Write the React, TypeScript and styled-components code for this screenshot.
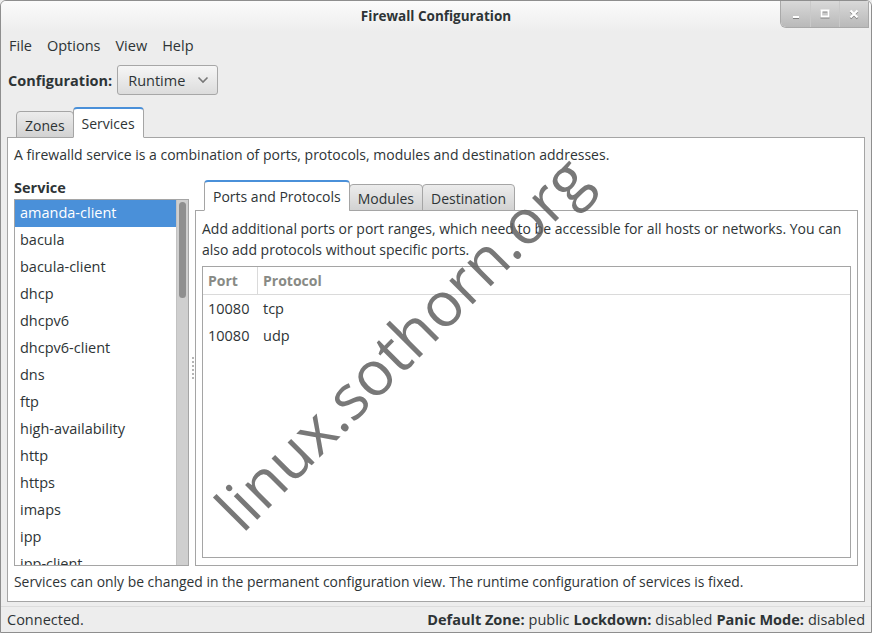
import React from "react";
import styled, { createGlobalStyle } from "styled-components";

const FONT = `"Open Sans", "DejaVu Sans", sans-serif`;

const GlobalStyle = createGlobalStyle`
  html, body {
    margin: 0;
    padding: 0;
    background: #ededed;
  }
  body {
    font-family: ${FONT};
    font-size: 14px;
    color: #2e3436;
  }
  * {
    box-sizing: border-box;
  }
`;

const Window = styled.div`
  position: relative;
  width: 872px;
  height: 633px;
  display: flex;
  flex-direction: column;
  background: #ededed;
  border: 1px solid #8e8e8e;
  border-radius: 6px 6px 0 0;
  overflow: hidden;
`;

const TitleBar = styled.div`
  height: 31px;
  display: grid;
  grid-template-columns: 1fr auto 1fr;
  background: linear-gradient(#fbfbfb, #ededed);
`;

const Title = styled.div`
  grid-column: 2;
  font-weight: bold;
  font-size: 13.5px;
  line-height: 31px;
`;

const WinButtons = styled.div`
  justify-self: end;
  align-self: start;
  display: flex;
  height: 28px;
  margin-top: -1px;
  margin-right: 2px;
  border: 1px solid #a9a9a9;
  border-top: none;
  border-radius: 0 0 0 6px;
  overflow: hidden;
`;

const WinButton = styled.div<{ $first?: boolean }>`
  width: 29px;
  height: 100%;
  display: flex;
  align-items: center;
  justify-content: center;
  background: linear-gradient(#dadada, #b9b9b9);
  border-left: ${(p) => (p.$first ? "none" : "1px solid #c9c9c9")};
  svg {
    filter: drop-shadow(0 1px 0 rgba(0, 0, 0, 0.35));
  }
`;

const MenuBar = styled.div`
  display: flex;
  height: 28px;
  align-items: center;
  margin-top: -1px;
`;

const MenuItem = styled.div`
  padding: 0 7px 0 8px;
  font-size: 14.5px;
  &:first-child {
    padding-left: 8px;
  }
`;

const ConfigRow = styled.div`
  display: flex;
  align-items: center;
  gap: 5px;
  height: 30px;
  margin-top: 6px;
  padding-left: 7px;
`;

const ConfigLabel = styled.div`
  font-weight: bold;
  font-size: 14.5px;
`;

const Combo = styled.div`
  width: 101px;
  height: 30px;
  display: flex;
  align-items: center;
  justify-content: space-between;
  padding: 0 8px 0 10px;
  font-size: 14.5px;
  border: 1px solid #a7a7a7;
  border-radius: 3px;
  background: linear-gradient(#f6f6f6, #dcdcdc);
`;

const Notebook = styled.div`
  flex: 1;
  display: flex;
  flex-direction: column;
  min-height: 0;
  padding: 0 6px 0 6px;
`;

const TabStrip = styled.div<{ $indent: number; $height: number }>`
  display: flex;
  align-items: flex-end;
  height: ${(p) => p.$height}px;
  padding-left: ${(p) => p.$indent}px;
  margin-bottom: -1px;
  position: relative;
  z-index: 1;
`;

const Tab = styled.div<{ $active?: boolean }>`
  display: flex;
  align-items: center;
  padding: 0 8px;
  font-size: 14px;
  height: ${(p) => (p.$active ? "31px" : "27px")};
  border: 1px solid #a5a5a5;
  border-bottom: ${(p) => (p.$active ? "1px solid #ffffff" : "1px solid #a5a5a5")};
  border-top: ${(p) => (p.$active ? "2px solid #4a90d9" : "1px solid #a5a5a5")};
  border-radius: 4px 4px 0 0;
  background: ${(p) =>
    p.$active ? "#ffffff" : "linear-gradient(#ececec, #d2d2d2)"};
  margin-right: -1px;
  padding-top: ${(p) => (p.$active ? "0" : "1px")};
`;

const Panel = styled.div`
  flex: 1;
  min-height: 0;
  display: flex;
  flex-direction: column;
  background: #ffffff;
  border: 1px solid #a5a5a5;
  padding: 8px 6px 10px 6px;
`;

const Text = styled.div<{ $lh?: number }>`
  font-size: 14px;
  line-height: ${(p) => p.$lh ?? 18}px;
  white-space: nowrap;
`;

const Split = styled.div`
  flex: 1;
  min-height: 0;
  display: grid;
  grid-template-columns: 175px 6px 1fr;
  margin-top: 15px;
`;

const ServiceColumn = styled.div`
  display: flex;
  flex-direction: column;
  min-height: 0;
`;

const ColumnLabel = styled.div`
  font-weight: bold;
  font-size: 14.5px;
  line-height: 18px;
  margin-bottom: 2px;
`;

const ListBox = styled.div`
  flex: 1;
  min-height: 0;
  display: flex;
  border: 1px solid #a5a5a5;
  overflow: hidden;
`;

const Rows = styled.div`
  flex: 1;
  overflow: hidden;
`;

const ServiceRow = styled.div<{ $selected?: boolean }>`
  height: 27px;
  line-height: 26px;
  padding-left: 5px;
  font-size: 14.5px;
  color: ${(p) => (p.$selected ? "#ffffff" : "#2e3436")};
  background: ${(p) => (p.$selected ? "#4a90d9" : "transparent")};
`;

const ScrollTrack = styled.div`
  width: 12px;
  background: #cfcfcf;
  border-left: 1px solid #c2c2c2;
  padding: 2px 2px 0 2px;
`;

const ScrollThumb = styled.div`
  height: 96px;
  border-radius: 4px;
  background: #8f8f8f;
`;

const Handle = styled.div`
  display: flex;
  align-items: center;
  justify-content: center;
`;

const Dots = styled.div`
  width: 2px;
  height: 22px;
  margin-left: 1px;
  margin-top: -10px;
  background: repeating-linear-gradient(#b5b5b5 0 2px, transparent 2px 4px);
`;

const InnerNotebook = styled.div`
  display: flex;
  flex-direction: column;
  min-height: 0;
`;

const InnerPanel = styled.div`
  flex: 1;
  min-height: 0;
  display: flex;
  flex-direction: column;
  border: 1px solid #a5a5a5;
  padding: 7px 6px 7px 6px;
`;

const Table = styled.div`
  flex: 1;
  margin-top: 6px;
  border: 1px solid #a5a5a5;
`;

const HeaderRow = styled.div`
  display: grid;
  grid-template-columns: 55px 1fr;
  height: 28px;
  border-bottom: 1px solid #dadada;
`;

const HeaderCell = styled.div<{ $divider?: boolean }>`
  display: flex;
  align-items: center;
  padding-left: 5px;
  font-weight: bold;
  font-size: 14px;
  color: #888a85;
  border-right: ${(p) => (p.$divider ? "1px solid #dadada" : "none")};
`;

const DataRow = styled.div`
  display: grid;
  grid-template-columns: 55px 1fr;
  height: 27px;
  align-items: center;
  font-size: 14.5px;
  &:first-of-type {
    margin-top: 1px;
  }
`;

const Cell = styled.div`
  padding-left: 5px;
`;

const Footer = styled(Text)`
  margin-top: 7px;
  font-size: 13.9px;
`;

const StatusBar = styled.div`
  height: 26px;
  display: flex;
  align-items: center;
  justify-content: space-between;
  padding: 0 6px;
  font-size: 14.5px;
  border-top: 1px solid #dcdcdc;
  margin-top: 4px;
`;

const StatusGroup = styled.div`
  display: flex;
  gap: 4px;
  b {
    font-weight: bold;
  }
`;

const Watermark = styled.div`
  position: absolute;
  left: 400px;
  top: 341px;
  transform: translate(-50%, -50%) rotate(-45deg);
  font-family: ${FONT};
  font-size: 62px;
  color: rgba(96, 96, 96, 0.85);
  white-space: nowrap;
  pointer-events: none;
`;

const services = [
  "amanda-client",
  "bacula",
  "bacula-client",
  "dhcp",
  "dhcpv6",
  "dhcpv6-client",
  "dns",
  "ftp",
  "high-availability",
  "http",
  "https",
  "imaps",
  "ipp",
  "ipp-client",
];

const ports = [
  { port: "10080", protocol: "tcp" },
  { port: "10080", protocol: "udp" },
];

function Chevron() {
  return (
    <svg width="12" height="8" viewBox="0 0 12 8">
      <path d="M1.5 1.5 L6 6 L10.5 1.5" fill="none" stroke="#777" strokeWidth="1.6" />
    </svg>
  );
}

export default function App() {
  return (
    <>
      <GlobalStyle />
      <Window>
        <TitleBar>
          <Title>Firewall Configuration</Title>
          <WinButtons>
            <WinButton $first>
              <svg width="10" height="10" viewBox="0 0 10 10">
                <rect x="2" y="7" width="6" height="2" fill="#fff" />
              </svg>
            </WinButton>
            <WinButton>
              <svg width="10" height="10" viewBox="0 0 10 10">
                <rect x="1.5" y="1.5" width="7" height="6" fill="none" stroke="#fff" strokeWidth="2" />
              </svg>
            </WinButton>
            <WinButton>
              <svg width="10" height="10" viewBox="0 0 10 10">
                <path d="M1.5 1.5 L8.5 8.5 M8.5 1.5 L1.5 8.5" stroke="#fff" strokeWidth="2.2" />
              </svg>
            </WinButton>
          </WinButtons>
        </TitleBar>

        <MenuBar>
          <MenuItem>File</MenuItem>
          <MenuItem>Options</MenuItem>
          <MenuItem>View</MenuItem>
          <MenuItem>Help</MenuItem>
        </MenuBar>

        <ConfigRow>
          <ConfigLabel>Configuration:</ConfigLabel>
          <Combo>
            Runtime
            <Chevron />
          </Combo>
        </ConfigRow>

        <Notebook>
          <TabStrip $indent={9} $height={43}>
            <Tab>Zones</Tab>
            <Tab $active>Services</Tab>
          </TabStrip>
          <Panel>
            <Text>
              A firewalld service is a combination of ports, protocols, modules and destination addresses.
            </Text>
            <Split>
              <ServiceColumn>
                <ColumnLabel>Service</ColumnLabel>
                <ListBox>
                  <Rows>
                    {services.map((s, i) => (
                      <ServiceRow key={s} $selected={i === 0}>
                        {s}
                      </ServiceRow>
                    ))}
                  </Rows>
                  <ScrollTrack>
                    <ScrollThumb />
                  </ScrollTrack>
                </ListBox>
              </ServiceColumn>
              <Handle>
                <Dots />
              </Handle>
              <InnerNotebook>
                <TabStrip $indent={9} $height={32}>
                  <Tab $active>Ports and Protocols</Tab>
                  <Tab>Modules</Tab>
                  <Tab>Destination</Tab>
                </TabStrip>
                <InnerPanel>
                  <Text $lh={21}>
                    Add additional ports or port ranges, which need to be accessible for all hosts or networks. You can
                    <br />
                    also add protocols without specific ports.
                  </Text>
                  <Table>
                    <HeaderRow>
                      <HeaderCell $divider>Port</HeaderCell>
                      <HeaderCell>Protocol</HeaderCell>
                    </HeaderRow>
                    {ports.map((p) => (
                      <DataRow key={p.protocol}>
                        <Cell>{p.port}</Cell>
                        <Cell>{p.protocol}</Cell>
                      </DataRow>
                    ))}
                  </Table>
                </InnerPanel>
              </InnerNotebook>
            </Split>
            <Footer>
              Services can only be changed in the permanent configuration view. The runtime configuration of services is fixed.
            </Footer>
          </Panel>
        </Notebook>

        <StatusBar>
          <span>Connected.</span>
          <StatusGroup>
            <b>Default Zone:</b> public <b>Lockdown:</b> disabled <b>Panic Mode:</b> disabled
          </StatusGroup>
        </StatusBar>
        <Watermark>linux.sothorn.org</Watermark>
      </Window>
    </>
  );
}
